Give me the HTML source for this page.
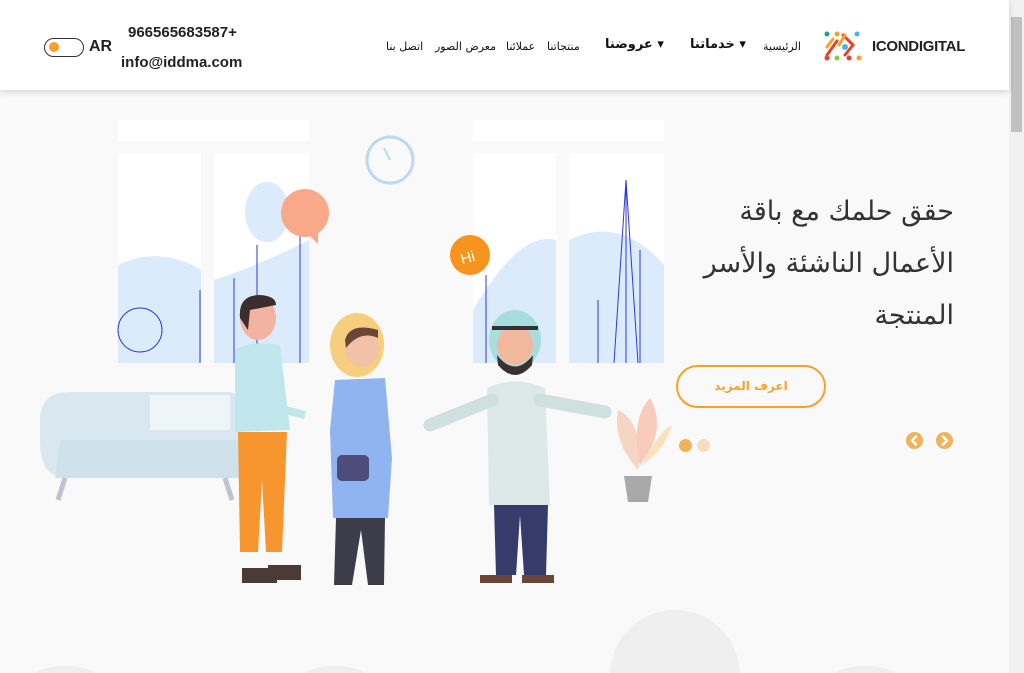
<!DOCTYPE html>
<html><head><meta charset="utf-8"><style>
*{margin:0;padding:0;box-sizing:border-box}
html,body{width:1024px;height:673px;overflow:hidden}
body{background:#f9f9f9;font-family:"DejaVu Sans","Liberation Sans",sans-serif;position:relative}
.hdr{position:absolute;left:0;top:0;width:1009px;height:90px;background:#fff;box-shadow:0 2px 6px rgba(0,0,0,.15);z-index:2}
.t{position:absolute;white-space:nowrap;color:#222}
.sb{position:absolute;right:0;top:0;width:15px;height:673px;background:#f1f1f1}
.sb div{position:absolute;left:2px;top:17px;width:11px;height:115px;background:#c1c1c1}
.arr{position:absolute;top:432px;width:17px;height:17px;border-radius:50%;background:#f0b25a}
</style></head><body>
<div class="hdr">
 <div style="position:absolute;left:44px;top:38px;width:40px;height:19px;border:1.5px solid #333;border-radius:10px"><div style="position:absolute;left:4px;top:3px;width:10px;height:10px;border-radius:50%;background:#f7a12b"></div></div>
 <div class="t" style="left:89px;top:38px;font:bold 16px 'Liberation Sans',sans-serif">AR</div>
 <div class="t" style="left:128px;top:24px;font:bold 15px 'Liberation Sans',sans-serif">966565683587+</div>
 <div class="t" style="left:121px;top:54px;font:bold 15px 'Liberation Sans',sans-serif">info@iddma.com</div>
 <div class="t" style="left:386px;top:40px;font-size:11px;direction:rtl;color:#111">اتصل بنا</div>
 <div class="t" style="left:435px;top:40px;font-size:11px;direction:rtl;color:#111">معرض الصور</div>
 <div class="t" style="left:506px;top:40px;font-size:11px;direction:rtl;color:#111">عملائنا</div>
 <div class="t" style="left:547px;top:40px;font-size:11px;direction:rtl;color:#111">منتجاتنا</div>
 <div class="t" style="left:605px;top:37px;font-size:13px;direction:rtl;font-weight:bold;color:#111">▾ عروضنا</div>
 <div class="t" style="left:690px;top:37px;font-size:13px;direction:rtl;font-weight:bold;color:#111">▾ خدماتنا</div>
 <div class="t" style="left:763px;top:40px;font-size:11px;direction:rtl;color:#111">الرئيسية</div>
 <svg style="position:absolute;left:823px;top:31px" width="42" height="31" viewBox="0 0 42 31">
  <g stroke-width="3" stroke-linecap="round" fill="none"><path d="M4 24 L14 10" stroke="#e8412b"/><path d="M4 16 L10 8" stroke="#f7a12b"/><path d="M20 4 L30 14 L22 24" stroke="#e8412b"/><path d="M16 14 L22 4" stroke="#f7a12b"/></g>
  <circle cx="4" cy="3" r="2.5" fill="#2a9d8f"/><circle cx="14" cy="3" r="2.5" fill="#f7a12b"/><circle cx="34" cy="3" r="2.5" fill="#4cb3e8"/><circle cx="22" cy="16" r="3" fill="#4cb3e8"/><circle cx="4" cy="27" r="2.5" fill="#e8412b"/><circle cx="14" cy="27" r="2.5" fill="#8cc63f"/><circle cx="26" cy="27" r="2.5" fill="#e8412b"/><circle cx="36" cy="27" r="2.5" fill="#f7a12b"/>
 </svg>
 <div class="t" style="left:872px;top:38px;font:bold 15px 'Liberation Sans',sans-serif;letter-spacing:-.3px;color:#222">ICONDIGITAL</div>
</div>
<svg style="position:absolute;left:0;top:0" width="1009" height="673">
 <g fill="#fff"><rect x="118" y="120" width="191" height="21"/><rect x="118" y="153" width="83" height="210"/><rect x="214" y="153" width="95" height="210"/>
 <rect x="473" y="120" width="191" height="21"/><rect x="473" y="153" width="83" height="210"/><rect x="569" y="153" width="95" height="210"/></g>
 <g fill="#dcebfb"><path d="M118 265 Q160 245 201 270 L201 363 L118 363Z"/><path d="M214 280 Q260 265 309 240 L309 363 L214 363Z"/><ellipse cx="267" cy="212" rx="22" ry="30"/>
 <path d="M473 310 Q520 230 556 240 L556 363 L473 363Z"/><path d="M569 240 Q620 215 664 265 L664 363 L569 363Z"/></g>
 <g stroke="#2f37d8" stroke-width="1" fill="none"><circle cx="140" cy="330" r="22"/><path d="M200 290 V363 M234 278 V363 M257 245 V363 M300 215 V363 M626 180 V363 M598 300 V363 M640 250 V363 M486 275 V363"/><path d="M614 363 L626 180 L638 363"/></g>
 <circle cx="390" cy="160" r="23" fill="none" stroke="#bcd8f2" stroke-width="3"/><path d="M390 160 L384 148" stroke="#bcd8f2" stroke-width="2"/>
 <circle cx="305" cy="213" r="24" fill="#f9a88a"/><path d="M310 236 L318 244 L318 232Z" fill="#f9a88a"/>
 <circle cx="470" cy="255" r="20" fill="#f7941d"/><text x="460" y="262" fill="#fff" font-size="15" font-family="Liberation Sans" transform="rotate(-15 470 255)">Hi</text>
 <path d="M40 420 Q40 392 70 392 L230 392 Q240 392 240 420 L240 475 L55 475 Q40 470 40 440Z" fill="#d9e8f0"/>
 <path d="M60 440 L240 440 L240 478 L55 478Z" fill="#cfe1ea"/><path d="M65 478 L58 500 M225 478 L232 500" stroke="#c0c3cf" stroke-width="5"/>
 <rect x="150" y="395" width="80" height="35" fill="#eef5f8"/>
 <ellipse cx="258" cy="318" rx="18" ry="22" fill="#f2b3a0"/><path d="M240 318 Q238 295 260 295 Q276 296 276 305 L250 310 L248 330Z" fill="#3a2d2b"/>
 <path d="M235 350 Q250 340 280 345 L290 430 L235 432Z" fill="#bfe7ec"/><path d="M285 410 L305 415" stroke="#bfe7ec" stroke-width="8"/>
 <path d="M238 432 L287 432 L282 552 L266 552 L262 480 L258 552 L240 552Z" fill="#f7962f"/>
 <rect x="242" y="568" width="35" height="15" fill="#4a3a38"/><rect x="268" y="565" width="33" height="15" fill="#4a3a38"/>
 <ellipse cx="357" cy="345" rx="27" ry="32" fill="#f5cf7e"/><ellipse cx="362" cy="348" rx="17" ry="19" fill="#f2c1a6"/><path d="M345 340 Q350 322 378 330 L378 338 Q360 330 346 348Z" fill="#6b4536"/>
 <path d="M335 380 L385 378 L392 458 L388 518 L333 518 L330 430Z" fill="#8fb4f0"/><rect x="337" y="455" width="32" height="26" rx="5" fill="#4c4d7a"/>
 <path d="M336 518 L385 518 L384 585 L368 585 L361 530 L352 585 L334 585Z" fill="#3d3d4a"/>
 <ellipse cx="515" cy="340" rx="26" ry="30" fill="#a7dedd"/><ellipse cx="515" cy="345" rx="18" ry="20" fill="#f2b89e"/><path d="M497 355 Q515 378 533 355 L532 365 Q515 385 498 365Z" fill="#3a3030"/><rect x="492" y="326" width="46" height="4" fill="#333"/>
 <path d="M487 388 Q515 375 545 388 L550 505 L489 505Z" fill="#dde9e8"/><path d="M492 400 L430 425 M540 400 L605 412" stroke="#cfe0df" stroke-width="13" stroke-linecap="round"/>
 <path d="M494 505 L548 505 L546 575 L524 575 L520 515 L516 575 L496 575Z" fill="#353b6b"/><rect x="480" y="575" width="32" height="8" fill="#6b4536"/><rect x="522" y="575" width="32" height="8" fill="#6b4536"/>
 <path d="M638 470 Q612 440 618 410 Q640 420 640 460Z" fill="#f7d5c4"/><path d="M640 465 Q630 420 650 398 Q668 430 640 465Z" fill="#f9cbbc"/><path d="M642 465 Q660 430 672 425 Q665 450 642 465Z" fill="#fbe0c0"/>
 <path d="M624 476 L652 476 L648 502 L628 502Z" fill="#a9a9a9"/>
 <circle cx="675" cy="675" r="65" fill="#efefef"/><ellipse cx="65" cy="680" rx="35" ry="14" fill="#efefef"/><ellipse cx="335" cy="680" rx="35" ry="14" fill="#efefef"/><ellipse cx="865" cy="680" rx="35" ry="14" fill="#efefef"/>
</svg>
<div class="t" style="right:70px;top:186px;font-size:27px;line-height:52px;text-align:right;direction:rtl;color:#333">حقق حلمك مع باقة<br>الأعمال الناشئة والأسر<br>المنتجة</div>
<div style="position:absolute;left:676px;top:365px;width:150px;height:43px;border:2px solid #f7a12b;border-radius:22px;color:#f7a12b;font-size:12px;font-weight:bold;text-align:center;line-height:39px;direction:rtl">اعرف المزيد</div>
<div style="position:absolute;left:679px;top:439px;width:13px;height:13px;border-radius:50%;background:#f0b25a"></div>
<div style="position:absolute;left:697px;top:439px;width:13px;height:13px;border-radius:50%;background:#f6dcc0"></div>
<div class="arr" style="left:906px"><svg width="17" height="17"><path d="M10 4.5 L6 8.5 L10 12.5" stroke="#fff" stroke-width="2.5" fill="none" stroke-linecap="round" stroke-linejoin="round"/></svg></div>
<div class="arr" style="left:936px"><svg width="17" height="17"><path d="M7 4.5 L11 8.5 L7 12.5" stroke="#fff" stroke-width="2.5" fill="none" stroke-linecap="round" stroke-linejoin="round"/></svg></div>
<div class="sb"><div></div></div>
</body></html>
